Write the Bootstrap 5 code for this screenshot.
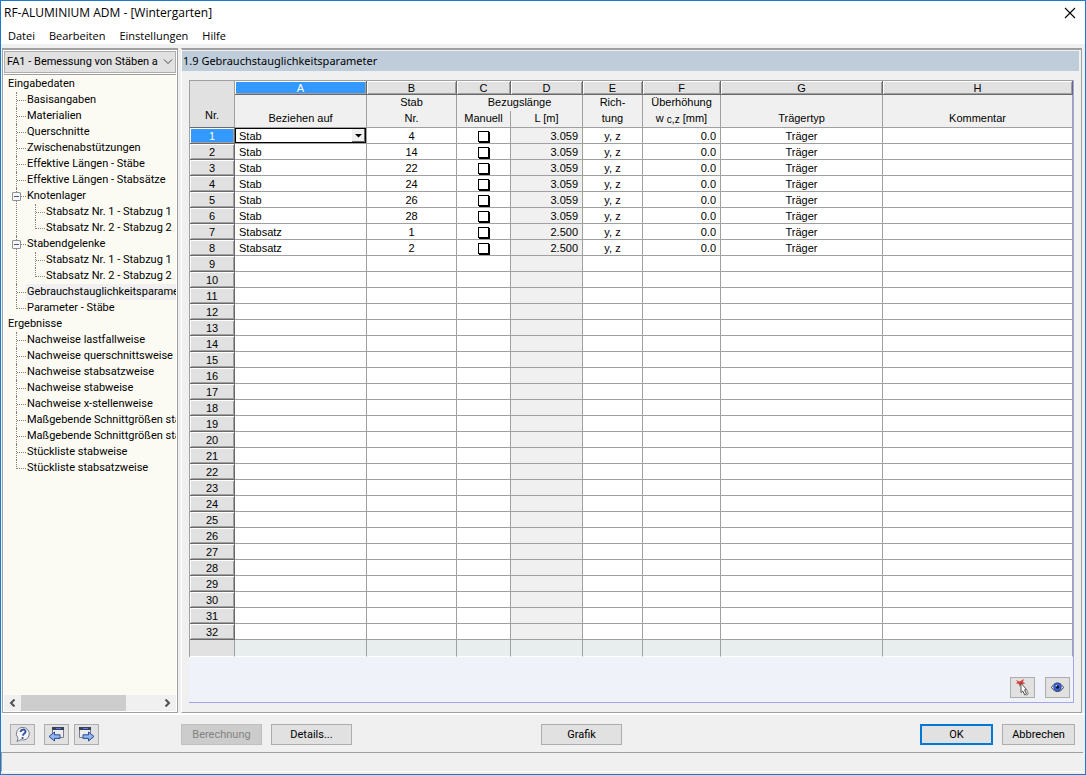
<!DOCTYPE html>
<html lang="de">
<head>
<meta charset="utf-8">
<meta name="viewport" content="width=device-width, initial-scale=1">
<title>RF-ALUMINIUM ADM - [Wintergarten]</title>
<link href="https://cdn.jsdelivr.net/npm/bootstrap@5.3.0/dist/css/bootstrap.min.css" rel="stylesheet">
<style>
  :root { --face: #f0f0f0; --line: #a0a0a0; --accent: #0078d7; --sel: #3399ff; }
  body { font: 11px/16px Roboto, "Liberation Sans", sans-serif; color: #000; background: var(--face); }
  .app-window { min-height: 100vh; border: 1px solid #1979ca; }
  .title-bar { height: 24px; padding: 0 9px 0 3px; font: 12px/16px "Open Sans", sans-serif; background: #fff; }
  .menu-bar { height: 19px; padding: 3px 7px 0; gap: 14px; font: 11px/16px "Open Sans", sans-serif; background: #fff; }
  .menu-bar a, .tree a { color: #000; text-decoration: none; }
  .work-area { padding: 4px 3px 0 1px; gap: 3px; min-height: 0; }
  .side-pane { width: 176px; border: 1px solid var(--line); border-top-width: 2px; background: #fff; padding: 1px; }
  .case-select { width: 100%; height: 22px; padding: 0 15px 0 2px; border: 1px solid #adadad; border-radius: 0; background: #e1e1e1; color: #000; appearance: none; text-overflow: clip; overflow: hidden; white-space: nowrap; }
  .case-arrow { right: 3px; top: 8px; pointer-events: none; }
  .tree { margin-top: 1px; border-top: 1px solid var(--line); background: #fcfbf3; overflow: hidden; white-space: nowrap; padding: 1px 0 0 4px; }
  .tree ul { list-style: none; margin: 0; padding: 0; }
  .tree li { position: relative; }
  .tree a { display: block; height: 16px; line-height: 16px; }
  .tree .branch { padding-left: 19px; }
  .tree .branch > li::before { content: ""; position: absolute; left: -11px; top: 0; bottom: 0; border-left: 1px dotted #808080; }
  .tree .branch > li:last-child::before { bottom: auto; height: 9px; }
  .tree .branch > li::after { content: ""; position: absolute; left: -10px; top: 8px; width: 9px; border-top: 1px dotted #808080; }
  .tree .chosen { background: var(--face); margin-left: -1px; padding-left: 1px; }
  .fold { position: absolute; left: -15px; top: 4px; width: 9px; height: 9px; padding: 0; border: 1px solid #919191; border-radius: 1px; background: #f6f6f6; z-index: 1; }
  .fold::before { content: ""; position: absolute; left: 1px; right: 1px; top: 3px; height: 1px; background: #3c5aa6; }
  .scroll-x { height: 16px; background: var(--face); padding: 0 5px; gap: 4px; }
  .scroll-track { height: 16px; }
  .scroll-thumb { width: 76%; height: 16px; background: #cdcdcd; }
  .main-pane { border-top: 2px solid var(--line); border-right: 1px solid var(--line); border-bottom: 1px solid var(--line); border-left: 1px solid #fff; min-width: 0; padding: 1px 2px 9px 0; }
  .pane-title { height: 20px; padding: 0 1px; margin: 0; font: 11px/20px "Noto Sans", sans-serif; background: #bfcddb; }
  .grid-box { margin: 9px 5px 0 7px; border-right: 1px solid #a6a6ec; border-bottom: 1px solid #a6a6ec; background: #eff3f9; }
  .param-grid { width: 100%; table-layout: fixed; border-collapse: separate; border-spacing: 0; border-top: 1px solid var(--line); border-left: 1px solid var(--line); font: 11px/14px "Liberation Sans", sans-serif; background: #fff; }
  .param-grid th, .param-grid td { height: 16px; padding: 0 4px; font-weight: 400; line-height: 15px; border-right: 1px solid var(--line); border-bottom: 1px solid var(--line); text-align: center; overflow: hidden; white-space: nowrap; }
  .param-grid tbody td { padding-top: 1px; line-height: 14px; }
  .param-grid .letters th { height: 14px; line-height: 12px; background: #e1e1e1; border-right-color: #696969; border-bottom-color: #696969; box-shadow: inset 1px 1px #fff, inset -1px -1px #a0a0a0; }
  .param-grid .caps th { background: var(--face); border-bottom: 0; line-height: 14px; padding-bottom: 2px; }
  .param-grid .caps-last th { height: 17px; border-bottom: 1px solid var(--line); }
  .param-grid .letters .corner { vertical-align: bottom; padding-bottom: 4px; line-height: 16px; box-shadow: none; border-color: var(--line); border-bottom-color: #696969; }
  .param-grid tbody th { background: #e1e1e1; border-right-color: #696969; border-bottom-color: #696969; box-shadow: inset 1px 1px #fff, inset -1px -1px #a0a0a0; line-height: 14px; }
  .param-grid .letters .hot, .param-grid tbody .hot { background: var(--sel); color: #fff; }
  .param-grid .txt { text-align: left; }
  .param-grid .num { text-align: right; }
  .param-grid .len { background: var(--face); }
  .param-grid tfoot td { background: #e8eeee; border-bottom-color: #fff; height: 17px; }
  .param-grid tfoot td:first-child { background: #e1e1e1; }
  .param-grid tbody .active-cell { position: relative; padding: 0; }
  .active-cell select { display: block; width: 100%; height: 15px; padding: 1px 16px 0 3px; border: 1px solid #000; border-radius: 0; background: #fff; color: #000; font: inherit; line-height: 12px; appearance: none; outline: 0; }
  .active-cell svg { position: absolute; right: 1px; top: 1px; pointer-events: none; }
  .low { font-size: 10px; vertical-align: -1px; line-height: 10px; }
  .tick { appearance: none; display: block; width: 11px; height: 11px; margin: 0 auto; border: 1px solid #000; background: #fff; box-shadow: 1px 1px #000; }
  .grid-tools { gap: 10px; padding: 0 3px 4px; }
  .push { height: 21px; padding: 0; border: 1px solid #adadad; border-radius: 0; background: #e1e1e1; color: #000; font: inherit; line-height: 19px; text-align: center; }
  .push:disabled { background: #ccc; border-color: #bfbfbf; color: #838383; }
  .push-icon { width: 25px; display: flex; align-items: center; justify-content: center; }
  .push-wide { width: 81px; }
  .push-end { width: 73px; }
  .push-default { border: 2px solid var(--accent); line-height: 17px; }
  .foot-bar { border-top: 2px solid #fff; height: 39px; padding: 2px 10px 0 9px; }
  .foot-help { width: 171px; }
  .foot-help .push-icon + .push-icon { margin-left: 9px; }
  .foot-help .push-icon + .push-icon + .push-icon { margin-left: 5px; }
  .foot-mid { gap: 9px; }
  .foot-view { margin-left: 189px; }
  .status-bar { height: 20px; margin: 0 2px 2px 0; border: 1px solid var(--line); border-right: 0; border-bottom-color: #fff; }
</style>
</head>
<body>
<div class="app-window d-flex flex-column">
  <header>
    <div class="title-bar d-flex align-items-center justify-content-between">
      <span>RF-ALUMINIUM ADM - [Wintergarten]</span>
      <button class="border-0 bg-transparent p-0 d-flex" type="button" aria-label="Schließen"><svg width="12" height="12" viewBox="0 0 12 12"><path d="M1 1l10 10M11 1L1 11" stroke="#000" stroke-width="1.1"/></svg></button>
    </div>
    <nav class="menu-bar d-flex"><a href="#">Datei</a><a href="#">Bearbeiten</a><a href="#">Einstellungen</a><a href="#">Hilfe</a></nav>
  </header>

  <div class="work-area d-flex flex-grow-1">
    <aside class="side-pane d-flex flex-column flex-shrink-0">
      <div class="position-relative d-flex">
        <select class="case-select" aria-label="Bemessungsfall"><option>FA1 - Bemessung von Stäben a</option></select>
        <svg class="case-arrow position-absolute" width="10" height="6" viewBox="0 0 10 6"><path d="M1 .5l4 4 4-4" fill="none" stroke="#444"/></svg>
      </div>
      <div class="tree flex-grow-1">
        <ul>
          <li><a href="#">Eingabedaten</a>
            <ul class="branch">
              <li><a href="#">Basisangaben</a></li>
              <li><a href="#">Materialien</a></li>
              <li><a href="#">Querschnitte</a></li>
              <li><a href="#">Zwischenabstützungen</a></li>
              <li><a href="#">Effektive Längen - Stäbe</a></li>
              <li><a href="#">Effektive Längen - Stabsätze</a></li>
              <li><button class="fold" type="button" aria-label="Zuklappen"></button><a href="#">Knotenlager</a>
                <ul class="branch"><li><a href="#">Stabsatz Nr. 1 - Stabzug 1</a></li><li><a href="#">Stabsatz Nr. 2 - Stabzug 2</a></li></ul></li>
              <li><button class="fold" type="button" aria-label="Zuklappen"></button><a href="#">Stabendgelenke</a>
                <ul class="branch"><li><a href="#">Stabsatz Nr. 1 - Stabzug 1</a></li><li><a href="#">Stabsatz Nr. 2 - Stabzug 2</a></li></ul></li>
              <li><a class="chosen" href="#">Gebrauchstauglichkeitsparamet</a></li>
              <li><a href="#">Parameter - Stäbe</a></li>
            </ul></li>
          <li><a href="#">Ergebnisse</a>
            <ul class="branch">
              <li><a href="#">Nachweise lastfallweise</a></li>
              <li><a href="#">Nachweise querschnittsweise</a></li>
              <li><a href="#">Nachweise stabsatzweise</a></li>
              <li><a href="#">Nachweise stabweise</a></li>
              <li><a href="#">Nachweise x-stellenweise</a></li>
              <li><a href="#">Maßgebende Schnittgrößen sta</a></li>
              <li><a href="#">Maßgebende Schnittgrößen sta</a></li>
              <li><a href="#">Stückliste stabweise</a></li>
              <li><a href="#">Stückliste stabsatzweise</a></li>
            </ul></li>
        </ul>
      </div>
      <div class="scroll-x d-flex align-items-center">
        <svg width="8" height="8" viewBox="0 0 8 8"><path d="M5.500 .5L2 4l3.500 3.500" fill="none" stroke="#505050" stroke-width="2"/></svg>
        <div class="scroll-track flex-grow-1"><div class="scroll-thumb"></div></div>
        <svg width="8" height="8" viewBox="0 0 8 8"><path d="M2.500 .5L6 4 2.500 7.500" fill="none" stroke="#505050" stroke-width="2"/></svg>
      </div>
    </aside>

    <main class="main-pane d-flex flex-column flex-grow-1">
      <h1 class="pane-title">1.9 Gebrauchstauglichkeitsparameter</h1>
      <div class="grid-box d-flex flex-column flex-grow-1">
        <table class="param-grid">
          <colgroup><col style="width:45px"><col style="width:132px"><col style="width:90px"><col style="width:54px"><col style="width:72px"><col style="width:60px"><col style="width:78px"><col style="width:162px"><col></colgroup>
          <thead>
            <tr class="letters"><th class="corner" rowspan="3">Nr.</th><th class="hot">A</th><th>B</th><th>C</th><th>D</th><th>E</th><th>F</th><th>G</th><th>H</th></tr>
            <tr class="caps"><th></th><th>Stab</th><th colspan="2">Bezugslänge</th><th>Rich-</th><th>Überhöhung</th><th></th><th></th></tr>
            <tr class="caps caps-last"><th>Beziehen auf</th><th>Nr.</th><th>Manuell</th><th>L [m]</th><th>tung</th><th>w <span class="low">c,z</span> [mm]</th><th>Trägertyp</th><th>Kommentar</th></tr>
          </thead>
          <tbody id="rows"></tbody>
          <tfoot><tr><td></td><td></td><td></td><td></td><td></td><td></td><td></td><td></td><td></td></tr></tfoot>
        </table>
        <div class="grid-tools d-flex flex-grow-1 justify-content-end align-items-end">
          <button class="push push-icon" type="button" aria-label="Auswählen"><svg width="17" height="17" viewBox="0 0 17 17"><path d="M2 1l3.500 1.500L10 0l-1 3 2.500 1.500L8 5 5.500 7.500 5 5 2 4.500 3.500 3z" fill="#d8453f"/><path d="M7 4l5.500 6.500-2 .4 2 4-1.800 1-1.900-3.900L7 13.500z" fill="#fff" stroke="#444" stroke-width=".9"/><path d="M12.800 11l1.500 4-2 1.500" fill="none" stroke="#888"/></svg></button>
          <button class="push push-icon" type="button" aria-label="Ansicht"><svg width="15" height="13" viewBox="0 0 15 13"><path d="M1.500 6.500C3.500 3 5.500 2 7.500 2s4 1 6 4.500c-2 3-4 4-6 4s-4-1-6-4z" fill="#e8ebf5" stroke="#333b52"/><circle cx="7.500" cy="6" r="3.900" fill="#3d63d6" stroke="#253a86" stroke-width=".6"/><circle cx="7.500" cy="6" r="1.700" fill="#0c1330"/><circle cx="6.500" cy="4.800" r=".8" fill="#cfe0ff"/></svg></button>
        </div>
      </div>
    </main>
  </div>

  <footer>
    <div class="foot-bar d-flex align-items-center">
      <div class="foot-help d-flex">
        <button class="push push-icon" type="button" aria-label="Hilfe"><svg width="17" height="17" viewBox="0 0 17 17"><path d="M9 1.500a6.300 6.300 0 1 1-2.200 12.200L3 15.500l1-3.400A6.300 6.300 0 0 1 9 1.500z" fill="#f4f6fa" stroke="#777c88"/><path d="M6.600 6c.2-3.200 5.200-3.200 4.900-.2C11.300 7.500 9 7.400 8.800 9.700" fill="none" stroke="#32509e" stroke-width="1.900"/><circle cx="8.600" cy="12" r="1.100" fill="#32509e"/></svg></button>
        <button class="push push-icon" type="button" aria-label="Zurück"><svg width="17" height="17" viewBox="0 0 17 17"><path d="M4.500 1.500h11v10h-11z" fill="#ececee" stroke="#7b7d86"/><path d="M4 1h12v3H4z" fill="#3b3f58"/><path d="M8 2.500h5" stroke="#4e7de0"/><path d="M1 10.500L6.500 6v2.800H12v3.600H6.500V15z" fill="#8fb6ee" stroke="#2b4a97"/></svg></button>
        <button class="push push-icon" type="button" aria-label="Weiter"><svg width="17" height="17" viewBox="0 0 17 17"><path d="M1.500 1.500h11v10h-11z" fill="#ececee" stroke="#7b7d86"/><path d="M1 1h12v3H1z" fill="#3b3f58"/><path d="M5 2.500h5" stroke="#4e7de0"/><path d="M16 10.500L10.500 6v2.800H5v3.600h5.500V15z" fill="#8fb6ee" stroke="#2b4a97"/></svg></button>
      </div>
      <div class="foot-mid d-flex">
        <button class="push push-wide" type="button" disabled>Berechnung</button>
        <button class="push push-wide" type="button">Details...</button>
      </div>
      <button class="push push-wide foot-view" type="button">Grafik</button>
      <div class="foot-mid d-flex ms-auto">
        <button class="push push-end push-default" type="submit">OK</button>
        <button class="push push-end" type="button">Abbrechen</button>
      </div>
    </div>
    <div class="status-bar"></div>
  </footer>
</div>
<script src="https://cdn.jsdelivr.net/npm/bootstrap@5.3.0/dist/js/bootstrap.bundle.min.js"></script>
<script>
  const members = [
    ["Stab", 4, "3.059"], ["Stab", 14, "3.059"], ["Stab", 22, "3.059"], ["Stab", 24, "3.059"],
    ["Stab", 26, "3.059"], ["Stab", 28, "3.059"], ["Stabsatz", 1, "2.500"], ["Stabsatz", 2, "2.500"]
  ];
  const picker = '<td class="active-cell"><select aria-label="Beziehen auf"><option>Stab</option><option>Stabsatz</option></select>' +
    '<svg width="13" height="13" viewBox="0 0 13 13"><path d="M0 0h12v12H0z" fill="#f0f0f0"/><path d="M12.500 0v12.500H0" fill="none" stroke="#696969"/><path d="M3 5h7L6.500 8.500z"/></svg></td>';
  let html = "";
  for (let n = 1; n <= 32; n++) {
    const m = members[n - 1];
    html += `<tr><th scope="row"${n === 1 ? ' class="hot"' : ""}>${n}</th>`;
    html += m
      ? `${n === 1 ? picker : `<td class="txt">${m[0]}</td>`}<td>${m[1]}</td><td><input class="tick" type="checkbox" aria-label="Manuell ${n}"></td><td class="num len">${m[2]}</td><td>y, z</td><td class="num">0.0</td><td>Träger</td><td></td>`
      : '<td></td><td></td><td></td><td class="len"></td><td></td><td></td><td></td><td></td>';
    html += "</tr>";
  }
  document.getElementById("rows").innerHTML = html;
</script>
</body>
</html>
